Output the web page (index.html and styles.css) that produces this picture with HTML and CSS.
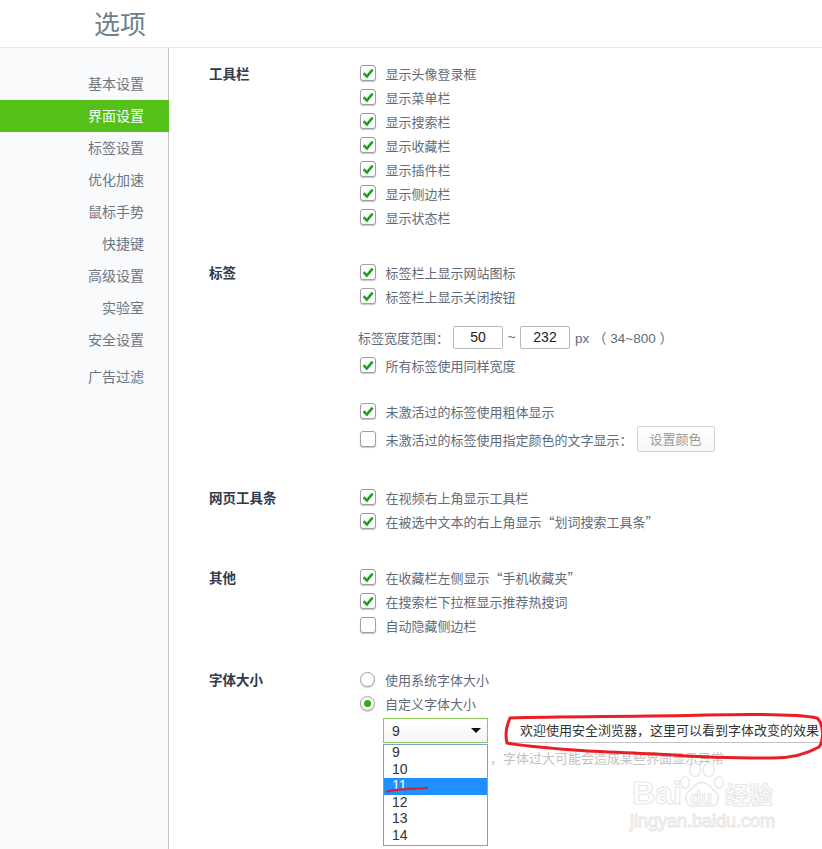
FILE: index.html
```html
<!DOCTYPE html>
<html lang="zh">
<head>
<meta charset="utf-8">
<title>选项</title>
<link rel="stylesheet" href="styles.css">
</head>
<body>
<svg width="0" height="0" class="defs">
  <symbol id="tick" viewBox="0 0 16 16"><path d="M3.6 8.2 L6.8 11.6 L12.6 4.6" fill="none" stroke="#1ea01e" stroke-width="2.6"/></symbol>
</svg>
<header class="top"><h1 class="title">选项</h1></header>
<div class="body">
  <nav class="side">
    <a class="nav">基本设置</a>
    <a class="nav on">界面设置</a>
    <a class="nav">标签设置</a>
    <a class="nav">优化加速</a>
    <a class="nav">鼠标手势</a>
    <a class="nav">快捷键</a>
    <a class="nav">高级设置</a>
    <a class="nav">实验室</a>
    <a class="nav">安全设置</a>
    <a class="nav ad">广告过滤</a>
  </nav>
  <main class="main">
    <section class="sec s1">
      <h2 class="lab">工具栏</h2>
      <div class="opts">
        <div class="row"><span class="cb"><svg class="tick"><use href="#tick"/></svg></span>显示头像登录框</div>
        <div class="row"><span class="cb"><svg class="tick"><use href="#tick"/></svg></span>显示菜单栏</div>
        <div class="row"><span class="cb"><svg class="tick"><use href="#tick"/></svg></span>显示搜索栏</div>
        <div class="row"><span class="cb"><svg class="tick"><use href="#tick"/></svg></span>显示收藏栏</div>
        <div class="row"><span class="cb"><svg class="tick"><use href="#tick"/></svg></span>显示插件栏</div>
        <div class="row"><span class="cb"><svg class="tick"><use href="#tick"/></svg></span>显示侧边栏</div>
        <div class="row"><span class="cb"><svg class="tick"><use href="#tick"/></svg></span>显示状态栏</div>
      </div>
    </section>
    <section class="sec">
      <h2 class="lab">标签</h2>
      <div class="opts">
        <div class="row"><span class="cb"><svg class="tick"><use href="#tick"/></svg></span>标签栏上显示网站图标</div>
        <div class="row"><span class="cb"><svg class="tick"><use href="#tick"/></svg></span>标签栏上显示关闭按钮</div>
        <div class="row range">标签宽度范围：<span class="num n1">50</span><span class="til">~</span><span class="num">232</span><span class="unit">px （ 34~800 ）</span></div>
        <div class="row after-range"><span class="cb"><svg class="tick"><use href="#tick"/></svg></span>所有标签使用同样宽度</div>
        <div class="row gap22"><span class="cb"><svg class="tick"><use href="#tick"/></svg></span>未激活过的标签使用粗体显示</div>
        <div class="row btnrow"><span class="cb"></span>未激活过的标签使用指定颜色的文字显示：<span class="btn">设置颜色</span></div>
      </div>
    </section>
    <section class="sec s3">
      <h2 class="lab">网页工具条</h2>
      <div class="opts">
        <div class="row"><span class="cb"><svg class="tick"><use href="#tick"/></svg></span>在视频右上角显示工具栏</div>
        <div class="row"><span class="cb"><svg class="tick"><use href="#tick"/></svg></span>在被选中文本的右上角显示“划词搜索工具条”</div>
      </div>
    </section>
    <section class="sec">
      <h2 class="lab">其他</h2>
      <div class="opts">
        <div class="row"><span class="cb"><svg class="tick"><use href="#tick"/></svg></span>在收藏栏左侧显示“手机收藏夹”</div>
        <div class="row"><span class="cb"><svg class="tick"><use href="#tick"/></svg></span>在搜索栏下拉框显示推荐热搜词</div>
        <div class="row"><span class="cb"></span>自动隐藏侧边栏</div>
      </div>
    </section>
    <section class="sec s5">
      <h2 class="lab">字体大小</h2>
      <div class="opts">
        <div class="row"><span class="rd"></span>使用系统字体大小</div>
        <div class="row"><span class="rd sel"></span>自定义字体大小</div>
        <div class="fontrow">
          <div class="select"><span>9</span><i class="arrow"></i></div>
          <div class="preview">欢迎使用安全浏览器，这里可以看到字体改变的效果</div>
        </div>
        <p class="hint">，字体过大可能会造成某些界面显示异常</p>
      </div>
    </section>
  </main>
</div>

<ul class="drop">
  <li>9</li><li>10</li><li class="hi">11</li><li>12</li><li>13</li><li>14</li>
</ul>

<div class="mark">
  <svg class="paw" width="44" height="47" viewBox="0 0 52 55">
    <g fill="#fff" stroke="#e6e6e6" stroke-width="1.6">
      <ellipse cx="6" cy="24" rx="5" ry="7"/>
      <ellipse cx="18" cy="9" rx="6.500" ry="8"/>
      <ellipse cx="34" cy="9" rx="6.500" ry="8"/>
      <ellipse cx="46" cy="24" rx="5" ry="7"/>
      <path d="M26 24 C18 24 16 30 10 35 C3 41 8 53 17 52 C23 51 29 51 35 52 C44 53 49 41 42 35 C36 30 34 24 26 24Z"/>
    </g>
  </svg>
  <span class="bai">Bai</span><span class="du">du</span><span class="jy">经验</span>
  <div class="url">jingyan.baidu.com</div>
</div>

<svg class="ink" width="822" height="849" viewBox="0 0 822 849">
  <path d="M507 743 C505 735 506 727 510 718 C560 716 640 717 706 715 C750 714 800 714 817 718 C824 724 824 740 819 747 C805 755 790 758 773 758 C740 758 700 757 673 755 C640 753 600 752 573 750 C550 748 525 746 507 743Z" fill="none" stroke="#ec1c24" stroke-width="3"/>
  <path d="M387 791.500 C395 789 410 789 427 788" fill="none" stroke="#d8202c" stroke-width="2.200" stroke-linecap="round"/>
</svg>
</body>
</html>
```
FILE: styles.css
```css
* { box-sizing: border-box; }
html, body { margin: 0; padding: 0; height: 849px; overflow: hidden; background: #fff; }
body {
  position: relative;
  font-family: "Noto Sans CJK SC", "Liberation Sans", sans-serif;
  font-size: 13px;
  color: #5f6b7a;
}
.defs { position: absolute; }
.top { height: 48px; border-bottom: 1px solid #e6e8eb; padding-left: 94px; }
.title { margin: 0; font-size: 26px; font-weight: 400; line-height: 46px; color: #6d7f90; }
.body { display: flex; height: 801px; }
.side {
  width: 169px; padding-top: 20px;
  background: #f8fafc; border-right: 1px solid #c8c8c8;
  display: flex; flex-direction: column;
}
.nav {
  height: 32px; line-height: 30px; text-align: right; padding-right: 24px;
  font-size: 14px; color: #6b7684;
}
.nav.on { background: #54c018; color: #fff; margin-right: -1px; padding-right: 25px; }
.nav.ad { margin-top: 5px; }
.main { flex: 1; padding: 13px 0 0 40px; }
.sec { display: flex; margin-bottom: 31px; }
.s3 { margin-top: 33px; margin-bottom: 32px; }
.s5 { margin-top: -1px; }
.lab {
  width: 151px; margin: 0; font-size: 13.500px; font-weight: 700; line-height: 24px; color: #2f3b4c;
}
.opts { flex: 1; position: relative; }
.row { display: flex; align-items: center; height: 24px; white-space: nowrap; }
.cb {
  width: 16px; height: 16px; margin-right: 9.500px; flex: none;
  background: #fff; border: 1px solid #a0a0a0; border-radius: 3px;
  box-shadow: 0 1px 1px rgba(0,0,0,.22);
  position: relative;
}
.tick { position: absolute; left: -1px; top: -1px; width: 16px; height: 16px; }
.rd {
  width: 15px; height: 15px; margin-right: 10px; flex: none;
  background: #fff; border: 1px solid #a0a0a0; border-radius: 50%;
  box-shadow: 0 1px 1px rgba(0,0,0,.18);
  display: flex; align-items: center; justify-content: center;
}
.rd.sel::after { content: ""; width: 7px; height: 7px; border-radius: 50%; background: #2fae0e; }
.range { margin-top: 17px; margin-left: -2px; }
.num {
  width: 50px; height: 23px; border: 1px solid #b9b9b9; border-radius: 2px;
  color: #222; text-align: center; line-height: 21px; font-size: 14px;
  font-family: "Liberation Sans", sans-serif; background: #fff;
}
.n1 { margin-left: 4px; }
.til { width: 17px; text-align: center; font-family: "Liberation Sans", sans-serif; font-size: 14px; }
.unit { margin-left: 5px; font-family: "Liberation Sans", "Noto Sans CJK SC", sans-serif; font-size: 13.500px; }
.after-range { margin-top: 4px; }
.gap22 { margin-top: 22px; }
.btnrow { height: 26px; margin-top: 3px; }
.btn {
  width: 78px; height: 26px; margin-left: 4px; line-height: 24px; text-align: center;
  border: 1px solid #d0d0d0; border-radius: 2px; background: linear-gradient(#fff, #f6f6f6);
  color: #9a9a9a;
}
.fontrow { display: flex; margin-top: 3px; margin-left: 23px; height: 25px; }
.select {
  width: 105px; height: 25px; border: 1px solid #8cc95a; padding: 0 6px 0 8px;
  display: flex; align-items: center; justify-content: space-between;
  font-family: "Liberation Sans", sans-serif; font-size: 14px; color: #333;
  background: linear-gradient(#fff, #f4f4f4);
}
.arrow {
  width: 0; height: 0; border-left: 5px solid transparent; border-right: 5px solid transparent;
  border-top: 5px solid #111;
}
.preview {
  width: 315px; margin-left: 19px; height: 25px; padding-left: 13px; line-height: 23px;
  border-bottom: 1px solid #c4c4c4; color: #333; white-space: nowrap;
}
.hint { margin: 5px 0 0 130px; font-size: 13px; line-height: 20px; color: #c2c2c2; white-space: nowrap; }
.drop {
  position: absolute; left: 383px; top: 744px; width: 105px; height: 102px;
  margin: 0; padding: 0; list-style: none; background: #fff;
  border: 1px solid #7f9dcf; font-family: "Liberation Sans", sans-serif; font-size: 14px; color: #333;
}
.drop li { height: 16.600px; line-height: 14.600px; padding-left: 8px; }
.drop .hi { background: #1e90ff; color: #fff; }
.ink { position: absolute; left: 0; top: 0; pointer-events: none; }
.mark { position: absolute; left: 632px; top: 762px; width: 150px; height: 70px; color: #fff; }
.paw { position: absolute; left: 48px; top: 0; }
.mark span, .url { position: absolute; -webkit-text-stroke: 1px #e6e6e6; font-family: "Liberation Sans", sans-serif; }
.bai { left: 0; top: 13px; font-size: 32px; font-weight: 700; }
.du { left: 58px; top: 26px; font-size: 18px; font-weight: 700; }
.mark .jy { left: 93px; top: 16px; font-size: 24px; font-family: "Noto Sans CJK SC", sans-serif; font-weight: 700; line-height: 32px; }
.url { left: -2px; top: 49px; font-size: 18px; white-space: nowrap; }
```
